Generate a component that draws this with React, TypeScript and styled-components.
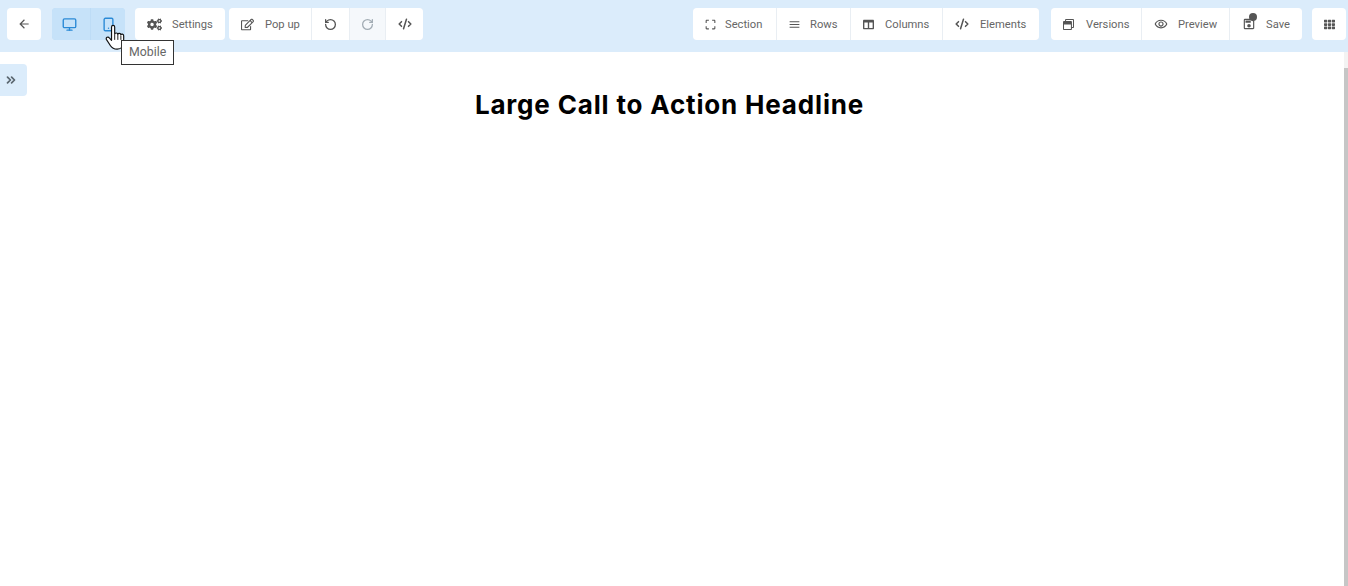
import React from 'react';
import styled, { createGlobalStyle } from 'styled-components';
import { FaColumns, FaCogs, FaRegEdit, FaRegWindowRestore, FaTh } from 'react-icons/fa';
import {
  MdArrowBack,
  MdCropFree,
  MdMenu,
  MdOutlineRemoveRedEye,
  MdOutlineSave,
} from 'react-icons/md';
import {
  LuChevronsRight,
  LuCodeXml,
  LuMonitor,
  LuRotateCcw,
  LuRotateCw,
  LuSmartphone,
} from 'react-icons/lu';

const GlobalStyle = createGlobalStyle`
  html, body {
    margin: 0;
    height: 100%;
    overflow: hidden;
    background: #fff;
  }
  * {
    box-sizing: border-box;
  }
`;

function HandCursor() {
  return (
    <CursorSvg viewBox="0 0 18 24" width="21" height="28">
      <path
        d="M5.6 2.6c0-1.9 2.7-1.9 2.7 0v6.1c.3-1.3 2.6-1.3 2.7.2.3-1.2 2.5-1.1 2.6.4.4-1 2.3-.8 2.4.8v4.6c0 3.5-1.8 6.8-5.6 6.8-2.9 0-4.4-.8-5.7-2.9L1.3 13.4c-.9-1.7 1.3-3 2.4-1.6l1.9 2.2z"
        fill="#fff"
        stroke="#111"
        strokeWidth="1"
        strokeLinejoin="round"
      />
      <path d="M8.3 9v4.6M11 9.2v4.4M13.6 10v3.6" stroke="#111" strokeWidth="0.8" fill="none" />
    </CursorSvg>
  );
}

export default function App() {
  return (
    <Page>
      <GlobalStyle />
      <Toolbar>
        <Cluster>
          <Group>
            <IconButton $width={34}>
              <MdArrowBack size={14} />
            </IconButton>
          </Group>
          <DeviceGroup>
            <DeviceButton $width={38}>
              <LuMonitor size={15} strokeWidth={2.2} />
            </DeviceButton>
            <DeviceButton $width={34}>
              <LuSmartphone size={15} strokeWidth={2.2} />
              <HandCursor />
              <Tooltip>Mobile</Tooltip>
            </DeviceButton>
          </DeviceGroup>
          <Group>
            <LabelButton $width={90}>
              <Glyph $slot={25}>
                <FaCogs size={15} />
              </Glyph>
              Settings
            </LabelButton>
          </Group>
          <PopupGroup>
            <LabelButton $width={82}>
              <Glyph $slot={24}>
                <FaRegEdit size={13} />
              </Glyph>
              Pop up
            </LabelButton>
            <IconButton $width={37}>
              <LuRotateCcw size={13} strokeWidth={2.4} />
            </IconButton>
            <IconButton $width={35} $disabled>
              <LuRotateCw size={13} strokeWidth={2.4} />
            </IconButton>
            <IconButton $width={37}>
              <LuCodeXml size={14} strokeWidth={2.6} />
            </IconButton>
          </PopupGroup>
        </Cluster>

        <Cluster>
          <Group>
            <LabelButton $width={83}>
              <Glyph $slot={20} $inset={-1}>
                <MdCropFree size={13} />
              </Glyph>
              Section
            </LabelButton>
            <LabelButton $width={73}>
              <Glyph $slot={21} $inset={-1}>
                <MdMenu size={13} />
              </Glyph>
              Rows
            </LabelButton>
            <LabelButton $width={91}>
              <Glyph $slot={22}>
                <FaColumns size={11} />
              </Glyph>
              Columns
            </LabelButton>
            <LabelButton $width={96}>
              <Glyph $slot={25}>
                <LuCodeXml size={14} strokeWidth={2.6} />
              </Glyph>
              Elements
            </LabelButton>
          </Group>
          <RightGroup>
            <LabelButton $width={90}>
              <Glyph $slot={23}>
                <FaRegWindowRestore size={11} />
              </Glyph>
              Versions
            </LabelButton>
            <LabelButton $width={87}>
              <Glyph $slot={24}>
                <MdOutlineRemoveRedEye size={14} />
              </Glyph>
              Preview
            </LabelButton>
            <LabelButton $width={72}>
              <Glyph $slot={24}>
                <MdOutlineSave size={14} />
                <Dot />
              </Glyph>
              Save
            </LabelButton>
          </RightGroup>
          <Group>
            <IconButton $width={34}>
              <FaTh size={11} />
            </IconButton>
          </Group>
        </Cluster>
      </Toolbar>

      <Workspace>
        <Canvas>
          <SideTab>
            <LuChevronsRight size={14} strokeWidth={3} />
          </SideTab>
          <Headline>Large Call to Action Headline</Headline>
        </Canvas>
        <ScrollTrack>
          <ScrollThumb />
        </ScrollTrack>
      </Workspace>
    </Page>
  );
}

// Styles
const Page = styled.div`
  display: flex;
  flex-direction: column;
  height: 586px;
  font-family: Roboto, 'Liberation Sans', sans-serif;
`;

const Toolbar = styled.header`
  display: flex;
  justify-content: space-between;
  height: 52px;
  padding: 8px 2px 12px 7px;
  background: #dbecfb;
`;

const Cluster = styled.div`
  display: flex;
  align-items: stretch;
`;

const Group = styled.div`
  display: flex;
  gap: 1px;
  border-radius: 4px;
  overflow: hidden;
  background: #e9eef3;
`;

const DeviceGroup = styled(Group)`
  position: relative;
  overflow: visible;
  margin: 0 10px 0 11px;
  background: #bddcf6;
`;

const PopupGroup = styled(Group)`
  margin-left: 4px;
`;

const RightGroup = styled(Group)`
  margin: 0 10px 0 12px;
`;

const IconButton = styled.div<{ $width: number; $disabled?: boolean }>`
  display: flex;
  align-items: center;
  justify-content: center;
  width: ${(props) => props.$width}px;
  background: ${(props) => (props.$disabled ? '#f5f8fb' : '#fff')};
  color: ${(props) => (props.$disabled ? '#a3adb5' : '#555')};
`;

const DeviceButton = styled.div<{ $width: number }>`
  position: relative;
  display: flex;
  align-items: center;
  justify-content: center;
  width: ${(props) => props.$width}px;
  background: #c6e2f9;
  color: #2b8ad6;

  &:first-child {
    padding-right: 3px;
    border-radius: 4px 0 0 4px;
  }

  &:last-child {
    border-radius: 0 4px 4px 0;
  }
`;

const LabelButton = styled.div<{ $width: number }>`
  display: flex;
  align-items: center;
  width: ${(props) => props.$width}px;
  padding-left: 12px;
  background: #fff;
  color: #666;
  font-size: 11.2px;
  white-space: nowrap;
`;

const Glyph = styled.span<{ $slot: number; $inset?: number }>`
  position: relative;
  display: flex;
  align-items: center;
  flex: none;
  width: ${(props) => props.$slot}px;
  color: #555;

  svg {
    margin-left: ${(props) => props.$inset ?? 0}px;
  }
`;

const Dot = styled.i`
  position: absolute;
  top: -4px;
  left: 7px;
  width: 8px;
  height: 8px;
  border-radius: 50%;
  background: #555;
`;

const CursorSvg = styled.svg`
  position: absolute;
  top: 16px;
  left: 14px;
`;

const Tooltip = styled.div`
  position: absolute;
  top: 32px;
  left: 30px;
  z-index: 2;
  padding: 0 7px;
  height: 25px;
  line-height: 23px;
  border: 1px solid #333;
  background: #fff;
  color: #666;
  font-size: 12.3px;
`;

const Workspace = styled.main`
  display: flex;
  flex: 1;
  min-height: 0;
`;

const Canvas = styled.div`
  position: relative;
  flex: 1;
  padding: 35px 5px 0 0;
  background: #fff;
`;

const SideTab = styled.div`
  position: absolute;
  top: 12px;
  left: 0;
  display: flex;
  align-items: center;
  justify-content: center;
  width: 27px;
  height: 32px;
  padding-right: 5px;
  border-radius: 0 4px 4px 0;
  background: #dbecfb;
  color: #5b6770;
`;

const Headline = styled.h1`
  margin: 0;
  text-align: center;
  color: #000;
  font-family: Inter, 'Liberation Sans', sans-serif;
  font-size: 26px;
  font-weight: 700;
  line-height: 36px;
  letter-spacing: 0.83px;
`;

const ScrollTrack = styled.div`
  flex: none;
  width: 4px;
  padding-top: 16px;
  background: #f3f3f3;
`;

const ScrollThumb = styled.div`
  height: 100%;
  background: #c6c6c6;
`;
